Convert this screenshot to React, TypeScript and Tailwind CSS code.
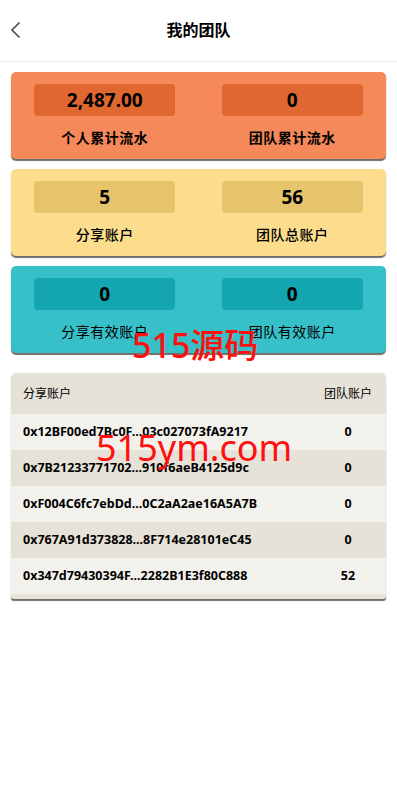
import React from "react";

type Stat = { value: string; label: string };

function StatCard({
  bg,
  inner,
  stats,
  labelWeight,
}: {
  bg: string;
  inner: string;
  stats: Stat[];
  labelWeight: string;
}) {
  return (
    <div className={`rounded-[5px] ${bg} shadow-[0_2px_1px_#6f6d69] pt-3 pb-[11px] grid grid-cols-2`}>
      {stats.map((s, i) => (
        <div key={i} className="flex flex-col items-center">
          <div className={`w-[141px] h-8 rounded-[4px] ${inner} flex items-center justify-center text-[19px] font-bold text-black leading-none`}>
            {s.value}
          </div>
          <div className={`mt-3 h-5 leading-5 text-[14px] tracking-[0.5px] text-black ${labelWeight}`}>{s.label}</div>
        </div>
      ))}
    </div>
  );
}

const rows = [
  ["0x12BF00ed7Bc0F...03c027073fA9217", "0"],
  ["0x7B21233771702...910f6aeB4125d9c", "0"],
  ["0xF004C6fc7ebDd...0C2aA2ae16A5A7B", "0"],
  ["0x767A91d373828...8F714e28101eC45", "0"],
  ["0x347d79430394F...2282B1E3f80C888", "52"],
];

export default function App() {
  return (
    <div
      className="relative w-[397px] min-h-[799px] bg-white text-black"
      style={{ fontFamily: '"Noto Sans", "Noto Sans CJK SC", sans-serif' }}
    >
      <header className="relative h-[62px] border-b border-[#ebebeb] flex items-center justify-center">
        <svg className="absolute left-[9px] top-[21px]" width="14" height="18" viewBox="0 0 14 18" fill="none">
          <path d="M10.5 1.5 L3 9 L10.5 16.5" stroke="#4a4a4a" strokeWidth="1.6" />
        </svg>
        <h1 className="text-[16px] font-bold leading-none -mt-[2px]">我的团队</h1>
      </header>

      <div className="px-[11px] pt-[10px] flex flex-col gap-[10px]">
        <StatCard
          bg="bg-[#f5895a]"
          inner="bg-[#e0672f]"
          labelWeight="font-bold"
          stats={[
            { value: "2,487.00", label: "个人累计流水" },
            { value: "0", label: "团队累计流水" },
          ]}
        />
        <StatCard
          bg="bg-[#fbdd8d]"
          inner="bg-[#e5c46b]"
          labelWeight="font-medium"
          stats={[
            { value: "5", label: "分享账户" },
            { value: "56", label: "团队总账户" },
          ]}
        />
        <StatCard
          bg="bg-[#38c0c8]"
          inner="bg-[#14a6b0]"
          labelWeight="font-normal"
          stats={[
            { value: "0", label: "分享有效账户" },
            { value: "0", label: "团队有效账户" },
          ]}
        />

        <div className="mt-[10px] rounded-t-[5px] rounded-b-[3px] bg-[#e7e2d7] pb-[5px] shadow-[0_2px_1px_#6f6d69]">
          <div className="h-[41px] flex items-center pl-3 pr-[14px] text-[12px]">
            <span className="flex-1">分享账户</span>
            <span className="w-12 text-center">团队账户</span>
          </div>
          {rows.map(([addr, n], i) => (
            <div
              key={i}
              className={`h-9 flex items-center pl-3 pr-[14px] text-[12.5px] font-bold ${i % 2 === 0 ? "bg-[#f3f1ec]" : "bg-[#e7e2d7]"}`}
            >
              <span className="flex-1">{addr}</span>
              <span className="w-12 text-center">{n}</span>
            </div>
          ))}
        </div>
      </div>

      <div className="absolute left-[132px] top-[321px] text-[34px] font-medium leading-[48px] text-[#ff1010] pointer-events-none">
        515源码
      </div>
      <div className="absolute left-[96px] top-[423px] text-[36px] leading-[50px] text-[#ff1010] pointer-events-none">
        515ym.com
      </div>
    </div>
  );
}
